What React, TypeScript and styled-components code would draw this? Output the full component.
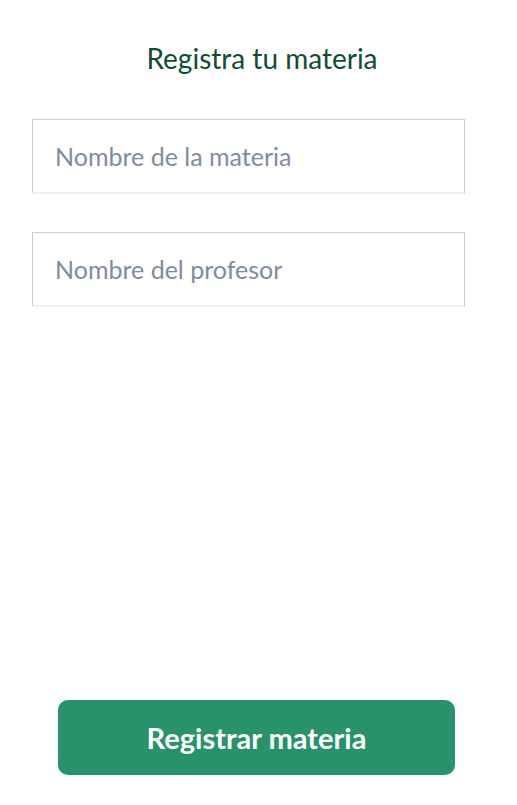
import React from "react";
import styled, { createGlobalStyle } from "styled-components";

const Global = createGlobalStyle`
  html, body { margin: 0; padding: 0; background: #ffffff; }
  body { font-family: Lato, "Noto Sans", sans-serif; }
  * { box-sizing: border-box; }
`;

const Page = styled.div`
  min-height: 100vh;
  display: flex;
  flex-direction: column;
`;

const Title = styled.h1`
  margin: 41px 0 0 0;
  padding-left: 7px;
  text-align: center;
  font-family: Lato, sans-serif;
  font-weight: 400;
  font-size: 28px;
  line-height: 34px;
  color: #0f4d31;
`;

const Form = styled.div`
  display: flex;
  flex-direction: column;
  gap: 38px;
  margin: 44px 0 0 32px;
  width: 433px;
`;

const Field = styled.input`
  display: block;
  width: 100%;
  height: 75px;
  border: 1px solid #c9ccd8;
  border-bottom: 2px solid #eef0f5;
  padding: 0 0 0 22px;
  font-family: Lato, sans-serif;
  font-size: 25px;
  color: #333;
  outline: none;
  background: #fff;
  &::placeholder { color: #7d8ca3; }
`;

const Spacer = styled.div`
  flex: 1;
`;

const Button = styled.button`
  margin: 0 0 30px 58px;
  width: 397px;
  height: 75px;
  border: none;
  border-radius: 10px;
  background: #28926a;
  color: #ffffff;
  font-family: Lato, sans-serif;
  font-weight: 700;
  font-size: 29px;
  cursor: pointer;
`;

export default function App() {
  return (
    <Page>
      <Global />
      <Title>Registra tu materia</Title>
      <Form>
        <Field placeholder="Nombre de la materia" />
        <Field placeholder="Nombre del profesor" />
      </Form>
      <Spacer />
      <Button>Registrar materia</Button>
    </Page>
  );
}
